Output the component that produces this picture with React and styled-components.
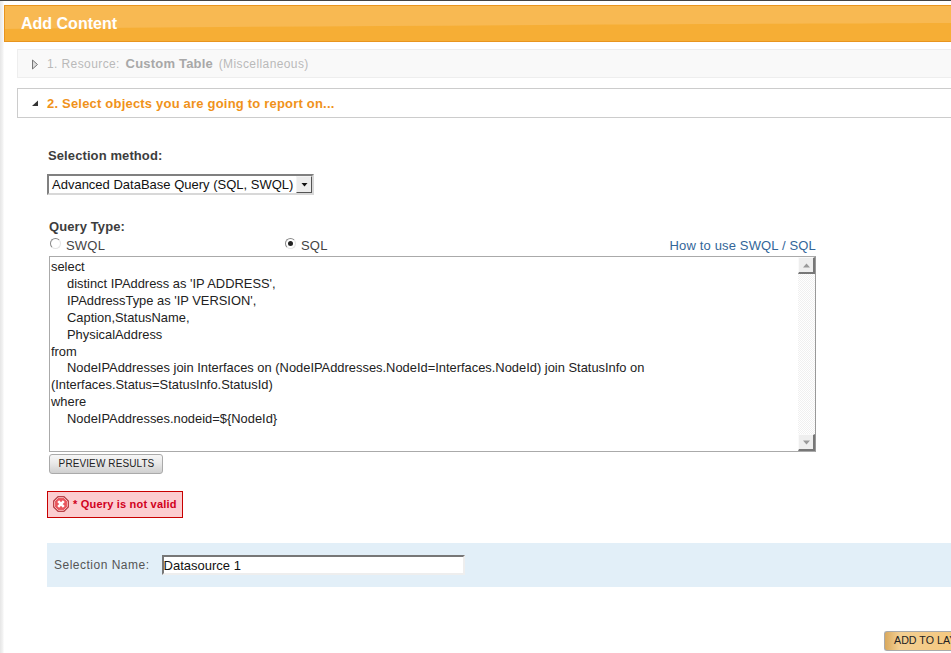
import React from "react";
import styled, { createGlobalStyle } from "styled-components";

const Global = createGlobalStyle`
  html, body { margin: 0; padding: 0; background: #fff; }
  body { font-family: "Liberation Sans", Arial, sans-serif; color: #333; }
`;

const Page = styled.div`
  width: 951px; height: 653px; overflow: hidden; display: flex; flex-direction: column;
  border-top: 1px solid #444; box-sizing: border-box;
`;
const Shell = styled.div`
  flex: 1; display: flex; flex-direction: column; padding: 4px 0 0 4px;
  background: linear-gradient(90deg, #e6e6e6 0, #f4f4f4 3px, #fff 4px);
  min-height: 0;
`;
const Content = styled.div`
  flex: 1; background: #fff; display: flex; flex-direction: column; min-width: 0;
`;
const Header = styled.div`
  height: 37px; box-sizing: border-box; flex: none; position: relative; overflow: hidden;
  border: 1px solid #e8951f; border-right: 0; background: #f6ae35;
  color: #fff; font-weight: 700; font-size: 16px; padding-left: 16px;
  display: flex; align-items: center;
  span { position: relative; }
`;
const Gloss = styled.svg`
  position: absolute; left: 0; top: 0; width: 100%; height: 100%;
`;
const Steps = styled.div`
  padding: 7px 0 0 13px; display: flex; flex-direction: column; gap: 10px;
`;
const Step = styled.div`
  height: ${p => (p.$active ? 30 : 29)}px; box-sizing: border-box; display: flex; align-items: center;
  border: 1px solid ${p => (p.$active ? "#ccc" : "#eee")}; border-right: 0;
  background: ${p => (p.$active ? "#fff" : "#f9f9f9")};
  padding-left: 13px; gap: 8px;
  font-size: ${p => (p.$active ? 13 : 12)}px;
  letter-spacing: ${p => (p.$active ? 0.2 : 0.4)}px;
  color: ${p => (p.$active ? "#f0921a" : "#b9b9b9")};
  font-weight: ${p => (p.$active ? 700 : 400)};
  b { color: #a8a8a8; margin: 0 2px; font-size: 13px; letter-spacing: .2px; }
`;
const Form = styled.div`
  padding: 30px 0 0 43px; display: flex; flex-direction: column;
`;
const Label = styled.div`
  font-size: 13px; font-weight: 700; color: #3d3d3d; line-height: 16px; letter-spacing: .1px;
  margin-left: 1px;
`;
const SelectBox = styled.div`
  margin-top: 10px; width: 267px; height: 21px; box-sizing: border-box; display: flex; align-items: center;
  justify-content: space-between; border: 2px solid; border-color: #808080 #d8d8d8 #d8d8d8 #808080;
  padding: 0 0 0 3px; font-size: 13px; color: #111; background: #fff;
`;
const ArrowBtn = styled.div`
  width: 16px; height: 17px; box-sizing: border-box; background: #ececec; display: flex;
  align-items: center; justify-content: center;
  border: 1px solid; border-color: #f4f4f4 #555 #555 #f4f4f4;
`;
const QueryLabel = styled(Label)`
  margin: 24px 0 0 2px;
`;
const RadioRow = styled.div`
  display: flex; align-items: center; height: 18px; width: 767px; margin-left: 2px;
  font-size: 13px; color: #444; letter-spacing: .2px; padding-top: 2px; box-sizing: border-box;
`;
const RadioItem = styled.div`
  display: flex; align-items: center; gap: 5px; width: ${p => p.$w}px; margin-left: ${p => p.$ml}px;
`;
const Radio = styled.span`
  width: 11px; height: 11px; box-sizing: border-box; border-radius: 50%; margin-top: -4px;
  border: 1px solid; border-color: #888 #e4e4e4 #e4e4e4 #888; background: #fff;
  display: flex; align-items: center; justify-content: center;
  &::after { content: ""; width: 5px; height: 5px; border-radius: 50%; background: ${p => (p.$on ? "#222" : "transparent")}; }
`;
const HelpLink = styled.a`
  margin-left: auto; color: #336699; font-size: 13px; letter-spacing: .15px; white-space: nowrap;
`;
const QueryBox = styled.div`
  margin: 3px 0 0 2px; width: 767px; height: 196px; box-sizing: border-box; border: 1px solid #aaa;
  border-right-color: #999; display: flex; background: #fff;
`;
const QueryText = styled.div`
  flex: 1; padding: 2px 0 0 1px; font-size: 12.9px; line-height: 16.9px; color: #222; min-width: 0;
`;
const QueryLine = styled.div`
  padding-left: ${p => (p.$indent ? 16 : 0)}px;
`;
const WrappedLine = styled.div`
  text-indent: 16px;
`;
const Scrollbar = styled.div`
  width: 17px; flex: none; display: flex; flex-direction: column; justify-content: space-between;
  background: repeating-conic-gradient(#f0f0f0 0 25%, #fff 0 50%) 0 0 / 2px 2px;
`;
const ScrollBtn = styled.div`
  height: 17px; box-sizing: border-box; background: #eee; display: flex; align-items: center; justify-content: center;
  border-style: solid; border-width: 1px 2px 2px 1px; border-color: #fafafa #777 #777 #fafafa;
`;
const Button = styled.button`
  margin: 2px 0 0 2px; width: 114px; height: 20px; padding: 0 0 2px 1px; border: 1px solid #aaa; border-radius: 3px;
  background: linear-gradient(#f7f7f7, #e9e9e9 45%, #cfcfcf); font: 10px "Liberation Sans", Arial, sans-serif;
  color: #222; letter-spacing: .1px;
`;
const ErrorBox = styled.div`
  margin-top: 17px; width: 136px; height: 27px; box-sizing: border-box; display: flex; align-items: center; gap: 3px;
  border: 1px solid #c80000; background: #fccdd0; padding: 0 0 1px 4px;
  color: #d0001c; font-size: 11px; font-weight: 700; letter-spacing: .2px; white-space: nowrap;
`;
const NameBand = styled.div`
  margin-top: 25px; height: 44px; background: #e2eff8; display: flex; align-items: center;
  padding-left: 7px; font-size: 12px; color: #555; gap: 12px; letter-spacing: .5px;
`;
const NameInput = styled.div`
  width: 303px; height: 20px; box-sizing: border-box; border: 2px solid; border-color: #777 #eee #eee #777;
  background: #fff; color: #111; display: flex; align-items: center; font-size: 13px; letter-spacing: 0;
`;
const Footer = styled.div`
  margin-top: 44px; display: flex; padding-left: 837px;
`;
const AddButton = styled.button`
  flex: none; width: 120px; height: 20px; padding: 0 0 2px 9px; text-align: left; border: 1px solid #aaa; border-right: 0; border-radius: 3px 0 0 3px;
  background: linear-gradient(90deg, #d9a95e, #f3cf92 12%, #f5c87e 60%, #eeb866);
  font: 10.7px "Liberation Sans", Arial, sans-serif; color: #222; white-space: nowrap;
`;

const Triangle = ({ d, fill = "#777", size = 7 }) => (
  <svg width={size} height={size} viewBox="0 0 7 7"><path d={d} fill={fill} /></svg>
);

const lines = [
  [0, "select"],
  [1, "distinct IPAddress as 'IP ADDRESS',"],
  [1, "IPAddressType as 'IP VERSION',"],
  [1, "Caption,StatusName,"],
  [1, "PhysicalAddress"],
  [0, "from"],
];

export default function App() {
  return (
    <Page>
      <Global />
      <Shell>
        <Content>
          <Header>
            <Gloss viewBox="0 0 947 35" preserveAspectRatio="none">
              <path d="M0 0H947V17C700 18 300 20 0 23Z" fill="#f8b952" />
            </Gloss>
            <span>Add Content</span>
          </Header>
          <Steps>
            <Step>
              <svg width="8" height="12" viewBox="0 0 8 12"><path d="M1.5 2 6.5 6.5 1.5 11Z" fill="#ddd" stroke="#777" /></svg>
              <span>1. Resource: <b>Custom Table</b> (Miscellaneous)</span>
            </Step>
            <Step $active>
              <svg width="8" height="10" viewBox="0 0 8 10"><path d="M7 2.5V8H1Z" fill="#333" /></svg>
              <span>2. Select objects you are going to report on...</span>
            </Step>
          </Steps>
          <Form>
            <Label>Selection method:</Label>
            <SelectBox>
              <span>Advanced DataBase Query (SQL, SWQL)</span>
              <ArrowBtn><Triangle d="M.5 2h6L3.5 5.5Z" fill="#111" /></ArrowBtn>
            </SelectBox>
            <QueryLabel>Query Type:</QueryLabel>
            <RadioRow>
              <RadioItem $w={235} $ml={1}><Radio />SWQL</RadioItem>
              <RadioItem $w={200} $ml={0}><Radio $on />SQL</RadioItem>
              <HelpLink>How to use SWQL / SQL</HelpLink>
            </RadioRow>
            <QueryBox>
              <QueryText>
                {lines.map(([i, t]) => <QueryLine key={t} $indent={i}>{t}</QueryLine>)}
                <WrappedLine>NodeIPAddresses join Interfaces on (NodeIPAddresses.NodeId=Interfaces.NodeId) join StatusInfo on (Interfaces.Status=StatusInfo.StatusId)</WrappedLine>
                <QueryLine>where</QueryLine>
                <QueryLine $indent>{"NodeIPAddresses.nodeid=${NodeId}"}</QueryLine>
              </QueryText>
              <Scrollbar>
                <ScrollBtn><Triangle d="M3.5 1.5 7 5.5H0Z" fill="#999" /></ScrollBtn>
                <ScrollBtn><Triangle d="M0 1.5H7L3.5 5.5Z" fill="#999" /></ScrollBtn>
              </Scrollbar>
            </QueryBox>
            <Button>PREVIEW RESULTS</Button>
            <ErrorBox>
              <svg width="18" height="18" viewBox="0 0 18 18">
                <path d="M5.8 1H12.2L17 5.8V12.2L12.2 17H5.8L1 12.2V5.8Z" fill="#b8434a" />
                <path d="M6.4 2.6H11.6L15.4 6.4V11.6L11.6 15.4H6.4L2.6 11.6V6.4Z" fill="#e9555c" stroke="#f3b5b7" strokeWidth="1" />
                <path d="M6.2 6.2 11.8 11.8M11.8 6.2 6.2 11.8" stroke="#fff" strokeWidth="2.6" />
              </svg>
              <span>* Query is not valid</span>
            </ErrorBox>
            <NameBand>
              <span>Selection Name:</span>
              <NameInput>Datasource 1</NameInput>
            </NameBand>
            <Footer><AddButton>ADD TO LAYOUT</AddButton></Footer>
          </Form>
        </Content>
      </Shell>
    </Page>
  );
}
